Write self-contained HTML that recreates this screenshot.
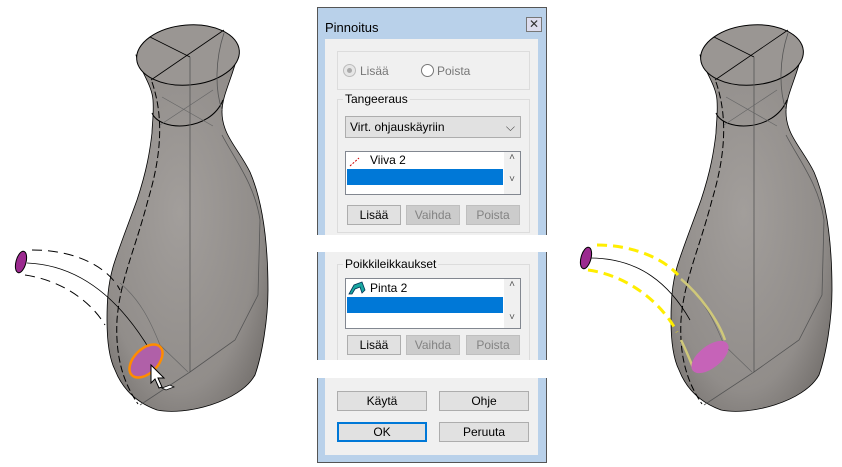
<!DOCTYPE html>
<html><head><style>
body{margin:0;width:842px;height:467px;background:#fff;position:relative;overflow:hidden;font-family:"Liberation Sans",sans-serif;font-size:12px;color:#000}
.a{position:absolute}
.btn{position:absolute;background:#e1e1e1;border:1px solid #adadad;box-sizing:border-box;text-align:center;line-height:18px;font-size:12px}
.dis{color:#838383;background:#cccccc;border-color:#bfbfbf}
.grp{position:absolute;border:1px solid #dcdcdc;box-sizing:border-box}
.lbl{position:absolute;background:#f0f0f0;padding:0 2px}
.list{position:absolute;background:#fff;border:1px solid #828790;box-sizing:border-box}
.sel{position:absolute;background:#0078d7}
.sb{position:absolute;right:0;top:0;bottom:0;width:16px;background:#f0f0f0;font-size:10px;color:#555;text-align:center}
</style></head><body>
<svg class="a" style="left:0;top:0" width="842" height="467">
<defs>
<radialGradient id="g" cx="0.45" cy="0.45" r="0.7"><stop offset="0" stop-color="#a29e9b"/><stop offset="0.7" stop-color="#918d8a"/><stop offset="1" stop-color="#6f6b68"/></radialGradient>
<g id="vase">
<path d="M136,55 C140,70 152,85 153,100 C154,115 152,125 152,133 C150,150 147,170 137,200 C128,225 118,250 113,267 C108,285 107,300 107,320 C107,345 110,360 115,370 C122,388 135,402 157,410 C185,416 240,402 255,375 C262,355 268,320 268,290 C268,240 262,200 250,172 C238,148 222,135 222,112 C222,95 232,80 239,50 Z" fill="url(#g)" stroke="#000" stroke-width="0.8"/>
<ellipse cx="188" cy="55" rx="51.5" ry="30" fill="#9a9693" stroke="#000" stroke-width="1" transform="rotate(-5 188 55)"/>
<path d="M151,80 L224,30 M150,37 L190,57" stroke="#000" stroke-width="0.8" fill="none"/>
<path d="M152,113 C160,132 210,132 223,100" stroke="#000" fill="none"/>
<path d="M190,57 L190,372 M190,372 L140,405 M190,372 L235,340 L258,295 L260,220 C255,185 235,160 222,135 M224,33 C215,60 215,90 222,110" stroke="#555" stroke-width="0.8" fill="none"/>
<path d="M152,82 C165,120 160,160 148,200 C135,250 120,280 117,320 C115,360 125,385 138,404" stroke="#000" stroke-dasharray="7,3" fill="none"/>
<path d="M162,97 L213,126 M160,125 L213,90" stroke="#666" stroke-width="0.7" fill="none"/>
<path d="M120,283 C140,300 150,320 160,345 L188,372" stroke="#666" stroke-width="0.7" fill="none"/>
</g>
</defs>
<use href="#vase"/>
<use href="#vase" transform="translate(564,0)"/>
<path d="M32,250 C80,250 110,270 120,290" stroke="#000" stroke-dasharray="10,6" fill="none"/>
<path d="M27,263 C80,265 120,300 150,350" stroke="#000" fill="none" stroke-width="0.8"/>
<path d="M25,275 C60,280 90,300 105,325" stroke="#000" stroke-dasharray="10,6" fill="none"/>
<ellipse cx="21" cy="262" rx="5" ry="11" fill="#9b2a8f" stroke="#000" transform="rotate(15 21 262)"/>
<ellipse cx="146" cy="361" rx="12" ry="20" fill="#b060a8" stroke="#ff8c00" stroke-width="2.5" transform="rotate(45 146 361)"/>
<path d="M151,365 l0,18 4,-4 4,9 3,-1 -4,-9 6,0 z" fill="#fff" stroke="#000" stroke-width="1"/>
<path d="M162,388 l8,-3 4,2 -8,3 z" fill="#fff" stroke="#000" stroke-width="0.8"/>
<path d="M597,245 C635,245 665,260 678,275" stroke="#ffee00" stroke-width="3" stroke-dasharray="10,6" fill="none"/>
<path d="M588,270 C625,275 660,300 677,332" stroke="#ffee00" stroke-width="3" stroke-dasharray="10,6" fill="none"/>
<path d="M681,279 C700,295 718,320 725,340 M681,340 C686,350 690,360 694,370" stroke="#cfc87a" stroke-width="2.5" fill="none"/>
<path d="M590,258 C640,258 670,285 690,320" stroke="#000" stroke-width="0.8" fill="none"/>
<ellipse cx="586" cy="258" rx="5" ry="11" fill="#9b2a8f" stroke="#000" transform="rotate(15 586 258)"/>
<ellipse cx="710" cy="357" rx="11" ry="22" fill="#c663b8" transform="rotate(52 710 357)"/>
</svg>

<div class="a" style="left:317px;top:7px;width:230px;height:456px;background:#b9d1ea;border:1px solid #555;box-sizing:border-box"></div>
<div class="a" style="left:325px;top:20px;font-size:13px">Pinnoitus</div>
<div class="a" style="left:526px;top:17px;width:14px;height:13px;border:1px solid #777;background:#dde;font-size:12px;line-height:12px;text-align:center;color:#333">✕</div>
<div class="a" style="left:325px;top:39px;width:213px;height:416px;background:#f0f0f0"></div>

<div class="grp" style="left:337px;top:51px;width:193px;height:39px"></div>
<div class="a" style="left:343px;top:64px;width:11px;height:11px;border:1px solid #bbb;border-radius:50%;background:#e6e6e6"><div style="margin:3px;width:5px;height:5px;border-radius:50%;background:#aaa"></div></div>
<div class="a" style="left:360px;top:64px;color:#777">Lisää</div>
<div class="a" style="left:421px;top:64px;width:11px;height:11px;border:1px solid #777;border-radius:50%;background:#fff"></div>
<div class="a" style="left:437px;top:64px;color:#777">Poista</div>

<div class="grp" style="left:337px;top:99px;width:193px;height:134px"></div>
<div class="lbl" style="left:343px;top:92px">Tangeeraus</div>
<div class="a" style="left:345px;top:116px;width:176px;height:22px;background:#e1e1e1;border:1px solid #adadad;box-sizing:border-box;padding-left:4px;line-height:20px">Virt. ohjauskäyriin<span style="position:absolute;right:5px;color:#444">⌵</span></div>
<div class="list" style="left:345px;top:151px;width:176px;height:44px">
<svg class="a" style="left:3px;top:5px" width="12" height="10"><path d="M1,9 L10,1" stroke="#c00" stroke-dasharray="2,1.5"/></svg>
<div class="a" style="left:24px;top:1px">Viiva 2</div>
<div class="sel" style="left:1px;top:17px;width:156px;height:16px"></div>
<div class="sb">˄<br><br>˅</div></div>
<div class="btn" style="left:347px;top:205px;width:54px;height:20px">Lisää</div>
<div class="btn dis" style="left:406px;top:205px;width:54px;height:20px">Vaihda</div>
<div class="btn dis" style="left:466px;top:205px;width:54px;height:20px">Poista</div>

<div class="a" style="left:310px;top:235px;width:245px;height:17px;background:#fff"></div>

<div class="grp" style="left:337px;top:264px;width:193px;height:100px"></div>
<div class="lbl" style="left:343px;top:257px">Poikkileikkaukset</div>
<div class="list" style="left:345px;top:278px;width:176px;height:51px">
<svg class="a" style="left:2px;top:2px" width="18" height="14"><path d="M1,13 L6,4 L14,1 L17,9 L14,12 L12,6 L7,8 L4,13 Z" fill="#1aa7a0" stroke="#035" stroke-width="0.8"/></svg>
<div class="a" style="left:24px;top:2px">Pinta 2</div>
<div class="sel" style="left:1px;top:18px;width:156px;height:16px"></div>
<div class="sb">˄<br><br><br>˅</div></div>
<div class="btn" style="left:347px;top:335px;width:54px;height:20px">Lisää</div>
<div class="btn dis" style="left:406px;top:335px;width:54px;height:20px">Vaihda</div>
<div class="btn dis" style="left:466px;top:335px;width:54px;height:20px">Poista</div>

<div class="a" style="left:310px;top:360px;width:245px;height:18px;background:#fff"></div>

<div class="btn" style="left:337px;top:391px;width:90px;height:20px">Käytä</div>
<div class="btn" style="left:439px;top:391px;width:90px;height:20px">Ohje</div>
<div class="btn" style="left:337px;top:422px;width:90px;height:20px;border:2px solid #0078d7;line-height:16px">OK</div>
<div class="btn" style="left:439px;top:422px;width:90px;height:20px">Peruuta</div>
</body></html>
